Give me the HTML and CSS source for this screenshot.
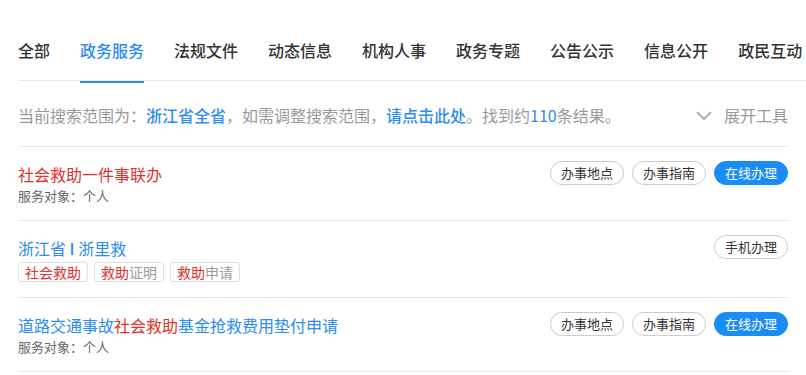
FILE: index.html
```html
<!DOCTYPE html>
<html lang="zh-CN">
<head>
    <link rel="stylesheet" href="styles.css">
    <meta charset="UTF-8">
    <meta name="viewport" content="width=device-width, initial-scale=1.0">
    <title>搜索结果</title>
</head>
<body>

    <!-- Category tabs -->
    <nav class="tabs">
        <a href="#" class="tab">全部</a>
        <a href="#" class="tab active">政务服务</a>
        <a href="#" class="tab">法规文件</a>
        <a href="#" class="tab">动态信息</a>
        <a href="#" class="tab">机构人事</a>
        <a href="#" class="tab">政务专题</a>
        <a href="#" class="tab">公告公示</a>
        <a href="#" class="tab">信息公开</a>
        <a href="#" class="tab">政民互动</a>
    </nav>

    <main class="results">
        <!-- Search scope -->
        <div class="scope">
            <p class="scope-text">当前搜索范围为：<b class="blue">浙江省全省</b>，如需调整搜索范围，<a href="#" class="blue link">请点击此处</a>。找到约<span class="blue">110</span>条结果。</p>
            <a href="#" class="tools">
                <svg width="16" height="9" viewBox="0 0 16 9"><path d="M1 1l7 7 7-7" fill="none" stroke="#999" stroke-width="1.5"/></svg>
                展开工具
            </a>
        </div>

        <!-- Result items -->
        <div class="item">
            <div class="item-main">
                <a href="#" class="item-title red">社会救助一件事联办</a>
                <p class="item-meta">服务对象：个人</p>
            </div>
            <div class="item-actions">
                <a href="#" class="btn">办事地点</a>
                <a href="#" class="btn">办事指南</a>
                <a href="#" class="btn btn-primary">在线办理</a>
            </div>
        </div>

        <div class="item">
            <div class="item-main">
                <a href="#" class="item-title">浙江省 <b>I</b> 浙里救</a>
                <div class="tags">
                    <span class="tag"><em>社会救助</em></span>
                    <span class="tag"><em>救助</em>证明</span>
                    <span class="tag"><em>救助</em>申请</span>
                </div>
            </div>
            <div class="item-actions">
                <a href="#" class="btn">手机办理</a>
            </div>
        </div>

        <div class="item">
            <div class="item-main">
                <a href="#" class="item-title">道路交通事故<em>社会救助</em>基金抢救费用垫付申请</a>
                <p class="item-meta">服务对象：个人</p>
            </div>
            <div class="item-actions">
                <a href="#" class="btn">办事地点</a>
                <a href="#" class="btn">办事指南</a>
                <a href="#" class="btn btn-primary">在线办理</a>
            </div>
        </div>
    </main>

</body>
</html>
```

FILE: styles.css
```css
body {
    margin: 0;
    padding: 0;
    background-color: #fff;
    font-family: "Noto Sans CJK SC", "Noto Sans", sans-serif;
    color: #333;
}
a {
    text-decoration: none;
    color: inherit;
}
p {
    margin: 0;
}
em, b {
    font-style: normal;
    font-weight: normal;
}
.blue {
    color: #2d8cf0;
}
.scope-text b, .scope-text .link, .item-title b {
    font-weight: 500;
}
.red, em {
    color: #e0302c;
}
/* Tabs */
.tabs {
    display: flex;
    gap: 30px;
    margin-left: 18px;
    padding-top: 38px;
    border-bottom: 1px solid #e8e8e8;
    white-space: nowrap;
}
.tab {
    position: relative;
    font-size: 16px;
    line-height: 24px;
    padding-bottom: 18px;
    font-weight: 500;
    color: #333;
}
.tab.active {
    color: #2d8cf0;
}
.tab.active::after {
    content: "";
    position: absolute;
    left: 0;
    right: 0;
    bottom: -3px;
    height: 2px;
    background-color: #3a8fd6;
}
/* Results */
.results {
    width: 770px;
    margin-left: 18px;
}
.scope {
    display: flex;
    justify-content: space-between;
    align-items: center;
    padding: 22px 0 19px;
    border-bottom: 1px solid #e8e8e8;
    font-size: 16px;
    line-height: 24px;
    color: #999;
}
.tools {
    display: flex;
    align-items: center;
    gap: 12px;
    color: #999;
}
.item {
    display: flex;
    justify-content: space-between;
    align-items: flex-start;
    padding: 14px 0 15px;
    border-bottom: 1px solid #e8e8e8;
}
.item-title {
    display: block;
    font-size: 16px;
    line-height: 26px;
    color: #2d8cf0;
}
.item-title.red {
    color: #e0302c;
}
.item-meta {
    font-size: 13px;
    line-height: 18px;
    color: #666;
}
.tags {
    display: flex;
    gap: 6px;
    margin-top: 1px;
}
.tag {
    font-size: 14px;
    line-height: 18px;
    padding: 0 6px;
    border: 1px solid #e0e0e0;
    border-radius: 3px;
    color: #999;
}
.item-actions {
    display: flex;
    gap: 8px;
}
.btn {
    font-size: 13px;
    line-height: 22px;
    padding: 0 10px;
    border: 1px solid #ccc;
    border-radius: 12px;
    color: #333;
}
.btn-primary {
    background-color: #1a8cf5;
    border-color: #1a8cf5;
    color: #fff;
}
```
